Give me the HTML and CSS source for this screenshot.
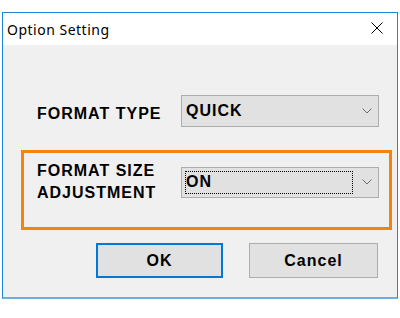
FILE: index.html
```html
<!DOCTYPE html>
<html lang="en">
<head>
    <meta charset="UTF-8">
    <meta name="viewport" content="width=device-width, initial-scale=1.0">
    <title>Option Setting</title>
    <link rel="stylesheet" href="styles.css">
</head>
<body>
    <div class="dialog">
        <!-- Title bar -->
        <div class="titlebar">
            <span class="title">Option Setting</span>
            <span class="close">
                <svg width="12" height="12" viewBox="0 0 12 12">
                    <path d="M0.5 0.5 L11.5 11.5 M11.5 0.5 L0.5 11.5" stroke="#000" stroke-width="1" fill="none" />
                </svg>
            </span>
        </div>

        <div class="content">
            <div class="row row-type">
                <div class="label">FORMAT TYPE</div>
                <div class="select">
                    <div class="value">QUICK</div>
                    <div class="arrow">
                        <svg width="10" height="6" viewBox="0 0 10 6">
                            <path d="M0.5 0.5 L5 5 L9.5 0.5" stroke="#6d6d6d" stroke-width="1" fill="none" />
                        </svg>
                    </div>
                </div>
            </div>

            <!-- Highlighted setting -->
            <div class="highlight">
                <div class="row">
                    <div class="label">FORMAT SIZE<br>ADJUSTMENT</div>
                    <div class="select focused">
                        <div class="value">ON</div>
                        <div class="arrow">
                            <svg width="10" height="6" viewBox="0 0 10 6">
                                <path d="M0.5 0.5 L5 5 L9.5 0.5" stroke="#6d6d6d" stroke-width="1" fill="none" />
                            </svg>
                        </div>
                    </div>
                </div>
            </div>

            <div class="buttons">
                <button class="btn btn-default">OK</button>
                <button class="btn btn-cancel">Cancel</button>
            </div>
        </div>
    </div>
</body>
</html>
```

FILE: styles.css
```css
body {
    margin: 0;
    background-color: #fff;
    font-family: "Liberation Sans", Arial, sans-serif;
}
.dialog {
    margin: 12px 0 0 2px;
    width: 396px;
    height: 287px;
    box-sizing: border-box;
    border: 1px solid #1c87d9;
    border-bottom: 2px solid #65aee6;
    background-color: #f0f0f0;
}
.titlebar {
    height: 32px;
    background-color: #fff;
    display: flex;
    align-items: center;
    justify-content: space-between;
    padding-left: 4px;
}
.title {
    font-family: "Noto Sans", sans-serif;
    font-size: 14px;
    letter-spacing: 0.5px;
    color: #000;
}
.close {
    display: flex;
    margin-right: 14px;
    margin-top: -2px;
}
.content {
    padding-top: 50px;
}
.row {
    display: flex;
    align-items: center;
}
.row-type {
    padding-left: 34px;
}
.row-type .label {
    padding-top: 6px;
}
.label {
    width: 144px;
    font-weight: bold;
    font-size: 16px;
    letter-spacing: 1px;
    line-height: 22px;
    color: #000;
}
.select {
    width: 198px;
    height: 32px;
    box-sizing: border-box;
    border: 1px solid #adadad;
    background-color: #e1e1e1;
    display: flex;
    padding: 3px 0 3px 3px;
}
.value {
    flex: 1;
    display: flex;
    align-items: center;
    border: 1px dotted transparent;
    font-weight: bold;
    font-size: 16px;
    letter-spacing: 1px;
    color: #000;
}
.focused .value {
    border-color: #000;
}
.focused {
    height: 31px;
}
.arrow {
    width: 25px;
    display: flex;
    align-items: center;
    padding-left: 9px;
    box-sizing: border-box;
}
.highlight {
    margin: 23px 0 0 18px;
    width: 371px;
    height: 80px;
    box-sizing: border-box;
    border: 3px solid #f6830f;
    padding: 7px 0 0 13px;
}
.buttons {
    display: flex;
    gap: 26px;
    margin-top: 13px;
    padding-left: 93px;
}
.btn {
    height: 35px;
    box-sizing: border-box;
    background-color: #e1e1e1;
    font-family: "Liberation Sans", Arial, sans-serif;
    font-weight: bold;
    font-size: 16px;
    letter-spacing: 1px;
    color: #000;
    padding: 0;
}
.btn-default {
    width: 127px;
    border: 2px solid #0078d7;
}
.btn-cancel {
    width: 129px;
    border: 1px solid #adadad;
}
```
